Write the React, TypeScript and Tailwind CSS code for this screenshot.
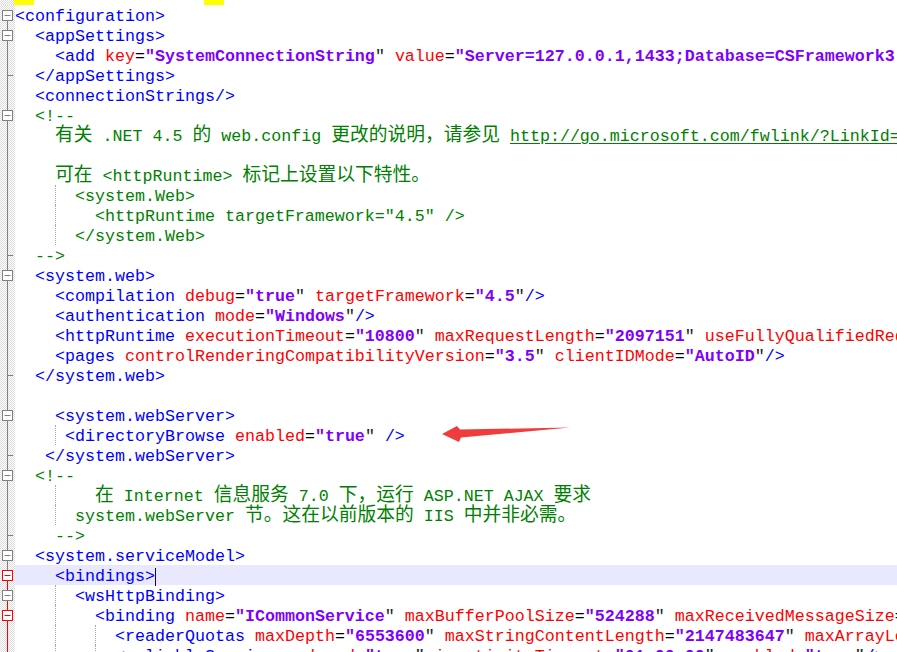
import React from "react";

type Gut = {
  top?: string;
  bottom?: string;
  box?: string;
  tick?: boolean;
};

type Line = {
  text: string;
  comment?: boolean;
  g: Gut;
  guides?: number[];
  highlight?: boolean;
  caret?: boolean;
};

const GRAY = "#808080";
const RED = "#ff0000";

const mid: Gut = { top: GRAY, bottom: GRAY };
const box: Gut = { top: GRAY, bottom: GRAY, box: GRAY };
const tick: Gut = { top: GRAY, bottom: GRAY, tick: true };
const redMid: Gut = { top: RED, bottom: RED };

const lines: Line[] = [
  { text: "<configuration>", g: { bottom: GRAY, box: GRAY } },
  { text: "  <appSettings>", g: box },
  {
    text: '    <add key="SystemConnectionString" value="Server=127.0.0.1,1433;Database=CSFramework3.0;User ID=sa;Password=123"/>',
    g: mid,
  },
  { text: "  </appSettings>", g: tick },
  { text: "  <connectionStrings/>", g: mid },
  { text: "  <!--", comment: true, g: box },
  {
    text: "    有关 .NET 4.5 的 web.config 更改的说明，请参见 http://go.microsoft.com/fwlink/?LinkId=235367。",
    comment: true,
    g: mid,
  },
  { text: "", comment: true, g: mid },
  { text: "    可在 <httpRuntime> 标记上设置以下特性。", comment: true, g: mid },
  { text: "      <system.Web>", comment: true, g: mid, guides: [40] },
  { text: '        <httpRuntime targetFramework="4.5" />', comment: true, g: mid, guides: [40] },
  { text: "      </system.Web>", comment: true, g: mid, guides: [40] },
  { text: "  -->", comment: true, g: tick },
  { text: "  <system.web>", g: box },
  { text: '    <compilation debug="true" targetFramework="4.5"/>', g: mid },
  { text: '    <authentication mode="Windows"/>', g: mid },
  {
    text: '    <httpRuntime executionTimeout="10800" maxRequestLength="2097151" useFullyQualifiedRedirectUrl="false"/>',
    g: mid,
  },
  { text: '    <pages controlRenderingCompatibilityVersion="3.5" clientIDMode="AutoID"/>', g: mid },
  { text: "  </system.web>", g: tick },
  { text: "", g: mid },
  { text: "    <system.webServer>", g: box },
  { text: '     <directoryBrowse enabled="true" />', g: mid, guides: [40] },
  { text: "   </system.webServer>", g: tick },
  { text: "  <!--", comment: true, g: box },
  { text: "        在 Internet 信息服务 7.0 下，运行 ASP.NET AJAX 要求", comment: true, g: mid, guides: [40] },
  { text: "      system.webServer 节。这在以前版本的 IIS 中并非必需。", comment: true, g: mid, guides: [40] },
  { text: "    -->", comment: true, g: tick },
  { text: "  <system.serviceModel>", g: box },
  { text: "    <bindings>", g: { top: GRAY, bottom: RED, box: RED }, highlight: true, caret: true },
  { text: "      <wsHttpBinding>", g: { top: RED, bottom: RED, box: GRAY }, guides: [40] },
  {
    text: '        <binding name="ICommonService" maxBufferPoolSize="524288" maxReceivedMessageSize="2147483647">',
    g: { top: RED, bottom: RED, box: RED },
    guides: [40],
  },
  {
    text: '          <readerQuotas maxDepth="6553600" maxStringContentLength="2147483647" maxArrayLength="6553600"/>',
    g: redMid,
    guides: [40, 80],
  },
  {
    text: '          <reliableSession ordered="true" inactivityTimeout="01:00:00" enabled="true"/>',
    g: redMid,
    guides: [40, 80],
  },
];

const guideLeft: Record<number, string> = {
  40: "left-[40px]",
  80: "left-[80px]",
};

// CJK runs are wider than two mono columns in the original editor
function Cjk({ text }: { text: string }) {
  const parts = text.split(/([\u3000-\u303f\u4e00-\u9fff\uff00-\uffef]+)/);
  return (
    <>
      {parts.map((p, i) =>
        i % 2 === 1 ? (
          <span key={i} className="font-['Noto_Sans_CJK_SC',sans-serif] text-[18.75px] leading-[10px]">
            {p}
          </span>
        ) : (
          <React.Fragment key={i}>{p}</React.Fragment>
        )
      )}
    </>
  );
}

function CommentText({ text }: { text: string }) {
  const m = text.match(/^(.*?)(http:\/\/[^\s。]+)(.*)$/);
  if (!m) {
    return (
      <span className="text-[#008000]">
        <Cjk text={text} />
      </span>
    );
  }
  return (
    <span className="text-[#008000]">
      <Cjk text={m[1]} />
      <span className="underline underline-offset-2">{m[2]}</span>
      <Cjk text={m[3]} />
    </span>
  );
}

function XmlText({ text }: { text: string }) {
  const re = /(\s+)|(<\/?[\w.:]+)|(\/?>)|([\w.:]+)(?==)|(=)|("[^"]*")|(.)/g;
  const out: React.ReactNode[] = [];
  let m: RegExpExecArray | null;
  let k = 0;
  while ((m = re.exec(text))) {
    if (m[1]) out.push(m[1]);
    else if (m[2] || m[3])
      out.push(
        <span key={k++} className="text-[#0000ff]">
          {m[0]}
        </span>
      );
    else if (m[4])
      out.push(
        <span key={k++} className="text-[#ff0000]">
          {m[4]}
        </span>
      );
    else if (m[5])
      out.push(
        <span key={k++} className="text-black">
          =
        </span>
      );
    else if (m[6])
      out.push(
        <React.Fragment key={k++}>
          <span className="font-bold text-[#8000ff]">{m[6].slice(0, -1)}</span>
          <span className="text-[#202020]">"</span>
        </React.Fragment>
      );
    else out.push(m[0]);
  }
  return <>{out}</>;
}

function Gutter({ g, h = 20 }: { g: Gut; h?: number }) {
  return (
    <div className="w-[15px] shrink-0 bg-[repeating-conic-gradient(#dcdcdc_0_25%,#ffffff_0_50%)] bg-[length:2px_2px]">
      <svg width="15" height={h} className="block">
        {g.top && <line x1="7.5" y1="0" x2="7.5" y2="10" stroke={g.top} />}
        {g.bottom && <line x1="7.5" y1="10" x2="7.5" y2="20" stroke={g.bottom} />}
        {g.tick && <line x1="7.5" y1="10.5" x2="13" y2="10.5" stroke={GRAY} />}
        {g.box && (
          <>
            <rect x="2.5" y="5.5" width="10" height="10" fill="#ffffff" stroke={g.box} />
            <line x1="4.5" y1="10.5" x2="10.5" y2="10.5" stroke={g.box} />
          </>
        )}
      </svg>
    </div>
  );
}

export default function App() {
  return (
    <div className="relative w-[897px] h-[652px] overflow-hidden bg-white font-['Liberation_Mono',monospace] text-[16.667px] leading-[20px]">
      {/* tail of the previous line: brace-match highlights */}
      <div className="flex h-[5px]">
        <Gutter g={{}} h={5} />
        <div className="flex-1">
          <span className="inline-block align-top w-[20px] h-[5px] bg-[#ffff00] -ml-px" />
          <span className="inline-block align-top w-[20px] h-[5px] bg-[#ffff00] ml-[170px]" />
        </div>
      </div>

      {lines.map((l, i) => (
        <div key={i} className="flex h-[20px]">
          <Gutter g={l.g} />
          <div className={`relative flex-1 whitespace-pre pt-[2px] ${l.highlight ? "bg-[#e8e8ff]" : ""}`}>
            {l.guides?.map((x) => (
              <span
                key={x}
                className={`absolute top-0 bottom-0 border-l border-dotted border-[#a8a8a8] ${guideLeft[x]}`}
              />
            ))}
            {l.comment ? <CommentText text={l.text} /> : <XmlText text={l.text} />}
            {l.caret && <span className="inline-block w-px h-[18px] bg-[#200040] align-[-5px]" />}
          </div>
        </div>
      ))}

      {/* red annotation arrow */}
      <svg className="absolute left-[430px] top-[415px]" width="150" height="35" viewBox="0 0 150 35">
        <polygon
          points="12,19 27,11 30,14.5 140,12.5 31,22.5 29,27"
          fill="#f03c3c"
        />
      </svg>
    </div>
  );
}
